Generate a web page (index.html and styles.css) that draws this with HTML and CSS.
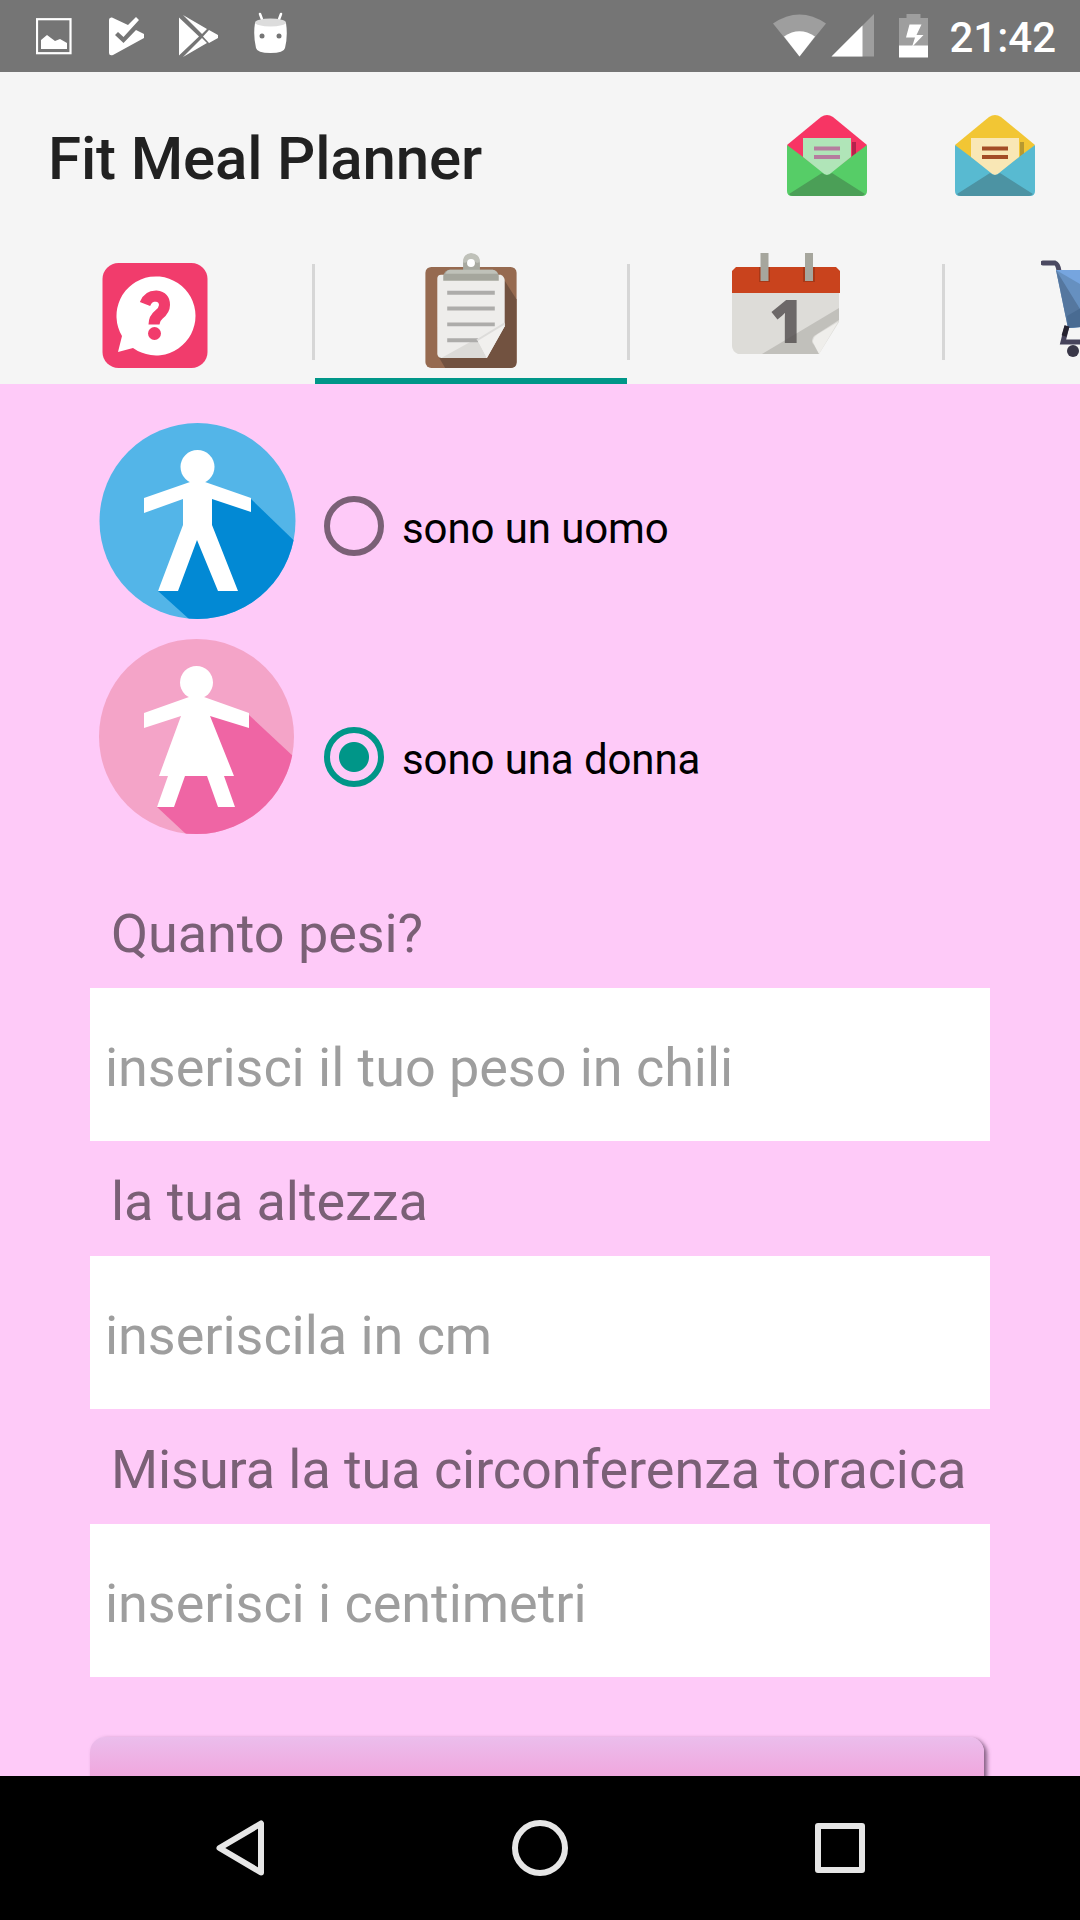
FILE: index.html
```html
<!DOCTYPE html>
<html lang="it">
<head>
  <meta charset="UTF-8">
  <title>Fit Meal Planner</title>
  <link rel="stylesheet" href="styles.css">
</head>
<body>

  <div class="status-bar">
    <div class="notifications">
      <svg width="36" height="48" viewBox="0 0 36 48">
        <rect x="1" y="7.200" width="33.500" height="34" fill="none" stroke="#fff" stroke-width="2.200"/>
        <path d="M5 37V28l6-5 8 6 5-2 7 4v6z" fill="#fff"/>
      </svg>
      <svg width="37" height="48" viewBox="0 0 37 48">
        <path d="M2 8q0-3 3-2.500L21 13l8-8 3 3-15.500 17-5.500-5-3 3 8.500 8L29 18l8 4q2 1.500 0 4L6 43q-4 1-4-2z" fill="#fff"/>
      </svg>
      <svg width="40" height="48" viewBox="0 0 40 48">
        <path d="M0 5.500L20 24.500 0 43.500zM4 3l24 14-5 5zM30 18l9 5v3l-9 5-6-6.500zM4 45l24-14-5-5z" fill="#fff"/>
      </svg>
      <svg width="35" height="48" viewBox="1 0 35 48">
        <path d="M7 2l3 8M28 2l-3 8" stroke="#fff" stroke-width="2.500" stroke-linecap="round"/>
        <path d="M2 11q15.500 5 31 0 2 13-1 25Q31 41 17.500 41T3 36Q0 23 2 11z" fill="#fff"/>
        <ellipse cx="17.500" cy="10.500" rx="15.500" ry="4" fill="#dcdcdc"/>
        <circle cx="9" cy="24" r="2.500" fill="#757575"/>
        <circle cx="26" cy="24" r="2.500" fill="#757575"/>
      </svg>
    </div>
    <div class="system">
      <svg width="155" height="48" viewBox="0 0 155 48">
        <path d="M0 11.500Q26.500-6.500 53 11.500L26.500 44.500z" fill="#9e9e9e"/>
        <path d="M11 24.500Q26.500 14 42 24.500L26.500 44.500z" fill="#fff"/>
        <path d="M58.500 44.500L101 2v42.500z" fill="#9e9e9e"/>
        <path d="M58.500 44.500L89.500 13.500v31z" fill="#fff"/>
        <path d="M126 6h7.500V2H147.500v4H155v28H126z" fill="#9e9e9e"/>
        <path d="M126 33.500h29V45.500H126z" fill="#fff"/>
        <path d="M136.500 12.500h12l-5 10.500h7L139 35l3-9.500h-9z" fill="#fff"/>
      </svg>
      <span class="clock">21:42</span>
    </div>
  </div>

  <header class="app-bar">
    <h1>Fit Meal Planner</h1>
    <div class="actions">
      <svg class="mail mail-green" width="82" height="84" viewBox="0 0 82 84">
        <path class="flap" d="M1 31L35 3q6-4 12 0l34 28-20 25H20z"/>
        <path class="shade" d="M66 28h4v20h-4z"/>
        <path class="body" d="M1 31l36 27q4 3 8 0l36-27v46q0 5-5 5H6q-5 0-5-5z"/>
        <path class="paper" d="M17 24h48v19L45 59q-4 4-8 0L17 43z"/>
        <path class="lines" d="M28 34.500h26M28 43h26"/>
        <path class="bottom" d="M3 80l33-21q5 4 10 0l33 21q-2 2-4 2H7q-3 0-4-2z"/>
      </svg>
      <svg class="mail mail-blue" width="82" height="84" viewBox="0 0 82 84">
        <path class="flap" d="M1 31L35 3q6-4 12 0l34 28-20 25H20z"/>
        <path class="shade" d="M66 28h4v20h-4z"/>
        <path class="body" d="M1 31l36 27q4 3 8 0l36-27v46q0 5-5 5H6q-5 0-5-5z"/>
        <path class="paper" d="M17 24h48v19L45 59q-4 4-8 0L17 43z"/>
        <path class="lines" d="M28 34.500h26M28 43h26"/>
        <path class="bottom" d="M3 80l33-21q5 4 10 0l33 21q-2 2-4 2H7q-3 0-4-2z"/>
      </svg>
    </div>
  </header>

  <nav class="tabs">
    <div class="tab help">
      <svg width="106" height="110" viewBox="0 0 106 110">
        <rect x="0.500" y="3" width="105" height="105" rx="16" fill="#f13c6c"/>
        <path d="M20 76A39.500 39.500 0 1 1 31 88L16 92z" fill="#fff"/>
        <path d="M43 44q3-8 11-8 8.500 1 8.500 9 0 5-5.500 9.500-5 4-5 10" fill="none" stroke="#f13c6c" stroke-width="11"/>
        <circle cx="52.500" cy="73.500" r="6.500" fill="#f13c6c"/>
      </svg>
    </div>
    <div class="tab selected">
      <svg width="92" height="116" viewBox="0 0 92 116">
        <rect y="14" width="92" height="102" rx="6" fill="#966a50"/>
        <path d="M68 28h12l12 19v63q0 6-6 6H20l-6-10z" fill="#725240"/>
        <path d="M16 22h60q4 2 4 6v46L62 106H16q-4-1-4-5V26q0-4 4-4z" fill="#eeedeb"/>
        <path d="M16 106l36-20 10 20z" fill="#dcdbd8"/>
        <path d="M80 71v3L62 106l-9-17z" fill="#f1f0ee"/>
        <path d="M22 40h48M22 56h48M22 72h48M22 88h31" stroke="#adacaa" stroke-width="4"/>
        <path d="M80 71L52 88" stroke="#dddcda" stroke-width="2"/>
        <path d="M38 19V10q0-8 8-9 9 1 9 9v9z" fill="#a8a9a0"/>
        <path d="M38 9q0-8 8-9 9 1 9 9l-3 1q-6-6-12 0z" fill="#bfc1b9"/>
        <path d="M18 28v-5q2-6 7-6h43q5 1 6 6v5z" fill="#a5a69d"/>
        <path d="M20 21q2-4 5-4h43q4 1 5 4z" fill="#bfc1b9"/>
        <circle cx="46" cy="10" r="4" fill="#fff"/>
      </svg>
    </div>
    <div class="tab calendar">
      <svg width="108" height="102" viewBox="0 0 108 102">
        <path d="M0 39h107v30L87 101H6q-6-3-6-8z" fill="#dddcd8"/>
        <path d="M106 69L87 101l-6-12q0-5 5-8z" fill="#efeeeb"/>
        <path d="M4 14h100l4 4v22H0V18z" fill="#c9431d"/>
        <path d="M27 14h11v15H27zM71 14h12v15H71z" fill="#a83817"/>
        <path d="M28.500 0h8v28h-8zM73 0h8v28h-8z" fill="#a6a69d"/>
        <text class="day" x="37" y="90">1</text>
        <path d="M30 101l77-46v12L82 83q-4 5 0 9l5 9z" fill="#55504a" fill-opacity="0.200"/>
      </svg>
    </div>
    <div class="tab cart">
      <svg width="112" height="100" viewBox="0 0 112 100">
        <path d="M2 4h12q3 1 4 8" fill="none" stroke="#4b4961" stroke-width="5" stroke-linecap="round"/>
        <path d="M15 11h90L92 63l-60 6H27z" fill="#6690c0"/>
        <path d="M15 11l24 39-12 19z" fill="#55779f"/>
        <path d="M15 11h90L39 25z" fill="#76a5df"/>
        <path d="M26 57l14-8 52 14-65 6z" fill="#496b92"/>
        <path d="M26 67l-4 16h70" fill="none" stroke="#47445c" stroke-width="5"/>
        <path d="M26 67l-3 10" stroke="#25222f" stroke-width="5"/>
        <circle cx="32" cy="92" r="6" fill="#393748"/>
      </svg>
    </div>
  </nav>

  <main class="form">
    <div class="choice">
      <svg width="197" height="196" viewBox="0 0 197 196">
        <clipPath id="manClip"><circle cx="98.500" cy="98" r="98"/></clipPath>
        <g clip-path="url(#manClip)">
          <rect width="197" height="196" fill="#53b5e8"/>
          <path d="M152 76l60 58v62H90L59 168l54-98z" fill="#0289d4"/>
          <path d="M98 116L59 168h80z" fill="#0289d4"/>
        </g>
        <circle cx="98.500" cy="44" r="17" fill="#fff"/>
        <path d="M91 59h15l46 16v14l-39-13v26l26 66h-20L98 117 79 168H59l25-66V76L45 90V75z" fill="#fff"/>
      </svg>
      <label class="option">
        <input type="radio" name="sesso">
        <span>sono un uomo</span>
      </label>
    </div>
    <div class="choice choice-woman">
      <svg width="197" height="196" viewBox="0 0 197 196">
        <clipPath id="womanClip"><circle cx="97.500" cy="97.500" r="97.500"/></clipPath>
        <g clip-path="url(#womanClip)">
          <rect width="197" height="196" fill="#f4a4c8"/>
          <path d="M150 76l60 56v64H88L58 168l50-92z" fill="#ef65a4"/>
        </g>
        <circle cx="97.500" cy="43.500" r="16.500" fill="#fff"/>
        <path d="M90 58h15l45 16v15l-39-12 24 60h-10l11 31h-17l-11-31H86l-11 31H58l11-31h-9L82 77 45 89V74z" fill="#fff"/>
      </svg>
      <label class="option">
        <input type="radio" name="sesso" checked>
        <span>sono una donna</span>
      </label>
    </div>

    <div class="field">
      <label for="peso">Quanto pesi?</label>
      <input type="text" id="peso" placeholder="inserisci il tuo peso in chili">
    </div>
    <div class="field">
      <label for="altezza">la tua altezza</label>
      <input type="text" id="altezza" placeholder="inseriscila in cm">
    </div>
    <div class="field">
      <label for="torace">Misura la tua circonferenza toracica</label>
      <input type="text" id="torace" placeholder="inserisci i centimetri">
    </div>

    <button class="submit" type="button"></button>
  </main>

  <footer class="nav-bar">
    <svg width="60" height="60" viewBox="0 0 60 60">
      <path d="M51 5.500v49L9.500 30z"/>
    </svg>
    <svg width="60" height="60" viewBox="0 0 60 60">
      <circle cx="30" cy="30" r="25"/>
    </svg>
    <svg width="60" height="60" viewBox="0 0 60 60">
      <rect x="8" y="8" width="44" height="44"/>
    </svg>
  </footer>

</body>
</html>
```

FILE: styles.css
```css
* {
  box-sizing: border-box;
}
body {
  margin: 0;
  width: 1080px;
  height: 1920px;
  display: flex;
  flex-direction: column;
  overflow: hidden;
  font-family: Roboto, sans-serif;
  background-color: #fecaf8;
}
svg {
  display: block;
  flex: none;
}
.status-bar {
  height: 72px;
  flex: none;
  display: flex;
  justify-content: space-between;
  padding: 12px 24px 0 36px;
  background-color: #757575;
}
.notifications {
  display: flex;
  gap: 35px;
}
.system {
  display: flex;
  gap: 21px;
}
.clock {
  color: white;
  font-size: 42px;
  font-weight: 500;
  line-height: 51px;
}
.app-bar {
  height: 168px;
  flex: none;
  display: flex;
  justify-content: space-between;
  align-items: center;
  padding: 0 44px 0 48px;
  background-color: #f5f5f5;
}
h1 {
  margin: 5px 0 0;
  font-size: 60px;
  font-weight: 500;
  letter-spacing: -0.15px;
  color: #212121;
}
.actions {
  display: flex;
  gap: 86px;
}
.mail-green .flap { fill: #f73564; }
.mail-green .shade { fill: #b6224c; }
.mail-green .paper { fill: #b0e5b8; }
.mail-green .lines { stroke: #b57d9e; }
.mail-green .body { fill: #56cd67; }
.mail-green .bottom { fill: #4b9f57; }
.mail-blue .flap { fill: #f2c634; }
.mail-blue .shade { fill: #b79930; }
.mail-blue .paper { fill: #f9e7b5; }
.mail-blue .lines { stroke: #a34d25; }
.mail-blue .body { fill: #58bad1; }
.mail-blue .bottom { fill: #4c93a3; }
.lines {
  stroke-width: 4;
}
.tabs {
  height: 144px;
  flex: none;
  display: flex;
  overflow: hidden;
  background-color: #f5f5f5;
}
.tab {
  width: 315px;
  flex: none;
  display: flex;
  justify-content: center;
  align-items: flex-end;
  padding: 0 5px 16px 0;
  background: linear-gradient(#d6d6d6, #d6d6d6) no-repeat right 24px / 3px 96px;
}
.tab.help {
  padding-bottom: 14px;
}
.tab.selected {
  padding-right: 3px;
  background:
    linear-gradient(#d6d6d6, #d6d6d6) no-repeat right 24px / 3px 96px,
    linear-gradient(#009688, #009688) no-repeat left bottom / 312px 6px;
}
.tab.selected svg {
  height: 115px;
}
.tab.calendar {
  padding: 0 3px 29px 0;
}
/* last tab is only partly on screen */
.tab.cart {
  width: 135px;
  justify-content: flex-start;
  padding: 0 0 25px 96px;
  overflow: hidden;
  background: none;
}
.day {
  font-family: "Open Sans", sans-serif;
  font-size: 60px;
  font-weight: 800;
  fill: #6c6868;
}
.calendar svg {
  overflow: visible;
}
.form {
  height: 1392px;
  flex: none;
  padding: 39px 90px 0;
  overflow: hidden;
}
.choice {
  height: 216px;
  display: flex;
  padding-left: 9px;
}
.choice-woman {
  height: 234px;
}
.option {
  display: flex;
  align-items: center;
  height: 60px;
  margin: 73px 0 0 28px;
  gap: 18px;
  font-size: 42px;
  letter-spacing: -0.1px;
}
.choice-woman .option {
  margin-top: 88px;
}
.option input {
  appearance: none;
  width: 60px;
  height: 60px;
  margin: 0;
  border: 6px solid #7a6076;
  border-radius: 50%;
}
.option input:checked {
  border-color: #009688;
  background: radial-gradient(circle, #009688 14.500px, transparent 15.500px);
}
.option span {
  padding-top: 5px;
}
.field label {
  display: block;
  height: 115px;
  padding: 29px 0 0 21px;
  font-size: 54px;
  line-height: 63px;
  letter-spacing: -0.08px;
  white-space: nowrap;
  color: #7a6076;
}
.field input {
  display: block;
  width: 900px;
  height: 153px;
  padding: 6px 15px 0;
  border: none;
  font-family: inherit;
  font-size: 54px;
  letter-spacing: -0.05px;
  background-color: white;
}
.field input::placeholder {
  color: #9e9e9e;
}
.submit {
  display: block;
  width: 894px;
  height: 120px;
  margin-top: 60px;
  border: none;
  border-radius: 15px;
  background: linear-gradient(#ebbdec, #f0a9df 36px, #e98fd2);
  box-shadow: 3px 2px 4px rgba(80, 50, 80, 0.7);
}
.nav-bar {
  height: 144px;
  flex: none;
  display: flex;
  justify-content: center;
  align-items: center;
  gap: 240px;
  background-color: black;
}
.nav-bar svg {
  fill: none;
  stroke: #e6e6e6;
  stroke-width: 6;
  stroke-linejoin: round;
}
```
